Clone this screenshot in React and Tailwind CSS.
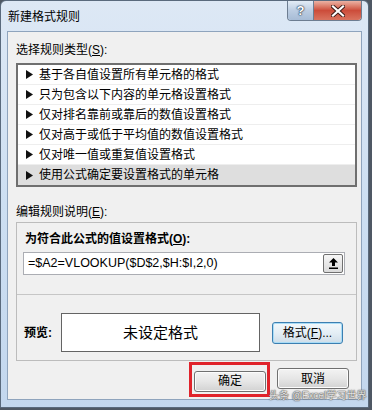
import React from 'react';

const font = "font-['Liberation_Sans','Noto_Sans_CJK_SC',sans-serif]";

const rules = [
  '基于各自值设置所有单元格的格式',
  '只为包含以下内容的单元格设置格式',
  '仅对排名靠前或靠后的数值设置格式',
  '仅对高于或低于平均值的数值设置格式',
  '仅对唯一值或重复值设置格式',
  '使用公式确定要设置格式的单元格',
];

// small black triangle in front of each rule
const Arrow = () => (
  <svg width="7" height="9" viewBox="0 0 7 9" className="shrink-0">
    <polygon points="0,0 7,4.5 0,9" fill="#111" />
  </svg>
);

const WinButton = ({ children, className = '' }) => (
  <button
    className={`h-[21px] w-[72px] rounded-[3px] border border-[#707070] bg-gradient-to-b from-[#f3f3f3] via-[#e6e6e6] to-[#d2d2d2] text-[12px] leading-none text-black shadow-[inset_0_0_0_1px_#fcfcfc] ${className}`}
  >
    {children}
  </button>
);

const App = () => {
  return (
    <div className={`relative h-[410px] w-[372px] overflow-hidden bg-[#4f5864] ${font}`}>
      {/* window */}
      <div className="flex h-[408px] w-[369px] flex-col rounded-t-[6px] border border-[#5a6a7d] bg-gradient-to-b from-[#dde8f5] via-[#cddff2] to-[#c3d7ee]">
        {/* title bar */}
        <div className="flex h-[30px] shrink-0 items-start">
          <span className="pl-[7px] pt-[8px] text-[12px] leading-[16px] text-black">新建格式规则</span>
          <div className="ml-auto mr-[6px] flex h-[20px] overflow-hidden rounded-b-[4px] border border-t-0 border-[#6d7d91]">
            <div className="flex w-[25px] items-center justify-center bg-gradient-to-b from-[#e3ecf6] via-[#bccde2] to-[#a7bcd6] text-[13px] font-bold leading-none text-white [text-shadow:0_0_1px_#23384f,0_0_1px_#23384f,0_0_2px_#23384f]">
              ?
            </div>
            <div className="flex w-[48px] items-center justify-center border-l border-[#6d7d91] bg-gradient-to-b from-[#eab2a4] via-[#cc4c3a] to-[#d9735f]">
              <svg width="14" height="12" viewBox="0 0 14 12">
                <path d="M2 1.5 L12 10.5 M12 1.5 L2 10.5" stroke="#3a1a16" strokeWidth="4" strokeLinecap="square" />
                <path d="M2 1.5 L12 10.5 M12 1.5 L2 10.5" stroke="#fff" strokeWidth="2.2" strokeLinecap="square" />
              </svg>
            </div>
          </div>
        </div>

        {/* client area */}
        <div className="flex flex-1 px-[6px]">
          <div className="flex flex-1 flex-col border border-[#8fa4bd] bg-[#f0f0f0]">
            <div className="pl-[8px] pt-[10px] text-[12px] leading-[16px] text-black">
              选择规则类型(<span className="underline">S</span>):
            </div>

            {/* rule type list */}
            <div className="ml-[8px] mt-[5px] h-[124px] w-[341px] border-2 border-[#6f6f6f] bg-white">
              {rules.map((r, i) => (
                <div
                  key={r}
                  className={`flex h-[20px] items-center gap-[6px] pl-[8px] text-[12px] leading-none text-black ${
                    i === rules.length - 1 ? 'bg-[#dedede]' : 'border-b border-[#eeeeee]'
                  }`}
                >
                  <Arrow />
                  <span>{r}</span>
                </div>
              ))}
            </div>

            <div className="mt-[17px] pl-[8px] text-[12px] leading-[16px] text-black">
              编辑规则说明(<span className="underline">E</span>):
            </div>

            {/* rule description group */}
            <div className="ml-[8px] mt-[2px] flex h-[139px] w-[341px] flex-col border border-[#bcbcbc]">
              <div className="pl-[8px] pt-[8px] text-[12px] font-bold leading-[16px] text-black">
                为符合此公式的值设置格式(<span className="underline">O</span>):
              </div>
              <div className="ml-[6px] mt-[5px] flex h-[23px] w-[322px] items-center border border-[#abadb3] bg-white pl-[4px] pr-[1px]">
                <span className="flex-1 text-[12.5px] leading-none text-black">=$A2=VLOOKUP($D$2,$H:$I,2,0)</span>
                <div className="flex h-[19px] w-[20px] items-center justify-center rounded-[2px] border border-[#707070] bg-gradient-to-b from-[#f6f6f6] to-[#dadada]">
                  <svg width="9" height="11" viewBox="0 0 9 11">
                    <polygon points="4.5,0 9,4.5 6,4.5 6,8 3,8 3,4.5 0,4.5" fill="#000" />
                    <rect x="0" y="9.5" width="9" height="1.5" fill="#000" />
                  </svg>
                </div>
              </div>
              <div className="mt-[19px] h-px bg-[#c6c6c6]" />
              <div className="mt-[18px] flex items-center">
                <span className="w-[44px] pl-[7px] text-[12px] font-bold leading-none text-black">预览:</span>
                <div className="flex h-[39px] w-[199px] items-center justify-center border border-[#646464] bg-white text-[15px] leading-none text-black">
                  未设定格式
                </div>
                <button className="ml-[12px] h-[22px] w-[71px] rounded-[3px] border border-[#3c7fb1] bg-gradient-to-b from-[#f3f8fb] via-[#e4eef5] to-[#cfdde8] text-[12px] leading-none text-black shadow-[inset_0_0_0_1px_#a9dcf6]">
                  格式(<span className="underline">F</span>)...
                </button>
              </div>
            </div>

            {/* dialog buttons */}
            <div className="mt-[7px] flex justify-end gap-[11px] pr-[12px]">
              <div className="relative">
                <WinButton>确定</WinButton>
                <div className="pointer-events-none absolute -bottom-[5px] -left-[5px] -right-[4px] -top-[6px] border-[3px] border-[#e0232b]" />
              </div>
              <WinButton>取消</WinButton>
            </div>
          </div>
        </div>

        <div className="h-[7px] shrink-0" />
      </div>

      {/* watermark */}
      <div className="absolute left-[269px] top-[390px] whitespace-nowrap text-[10px] leading-[12px] text-[#e4e4e4] [text-shadow:0_0_1px_#555,0_0_1px_#555,0_0_2px_#777]">
        头条 @Excel学习世界
      </div>
    </div>
  );
};

export default App;
